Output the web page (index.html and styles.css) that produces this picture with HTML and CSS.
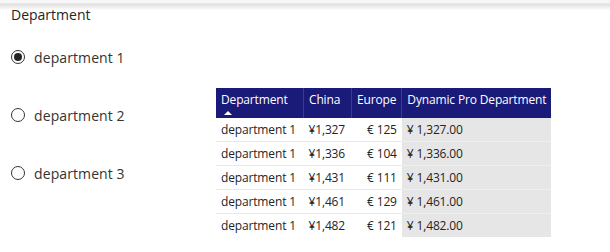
FILE: index.html
```html
<!DOCTYPE html>
<html lang="en">
<head>
    <meta charset="UTF-8">
    <title>Department Slicer</title>
    <link rel="stylesheet" href="styles.css">
</head>
<body>
    <div class="topbar"></div>
    <div class="page">
        <div class="slicer">
            <h1 class="slicer-title">Department</h1>
            <label class="option"><span class="radio checked"></span>department 1</label>
            <label class="option"><span class="radio"></span>department 2</label>
            <label class="option"><span class="radio"></span>department 3</label>
        </div>

        <table class="matrix">
            <thead>
                <tr>
                    <th class="col-dept">Department<span class="sort-arrow"></span></th>
                    <th class="col-china">China</th>
                    <th class="col-europe">Europe</th>
                    <th class="col-dyn">Dynamic Pro Department</th>
                </tr>
            </thead>
            <tbody>
                <tr><td>department 1</td><td>¥1,327</td><td class="num">€ 125</td><td class="dyn">¥ 1,327.00</td></tr>
                <tr><td>department 1</td><td>¥1,336</td><td class="num">€ 104</td><td class="dyn">¥ 1,336.00</td></tr>
                <tr><td>department 1</td><td>¥1,431</td><td class="num">€ 111</td><td class="dyn">¥ 1,431.00</td></tr>
                <tr><td>department 1</td><td>¥1,461</td><td class="num">€ 129</td><td class="dyn">¥ 1,461.00</td></tr>
                <tr><td>department 1</td><td>¥1,482</td><td class="num">€ 121</td><td class="dyn">¥ 1,482.00</td></tr>
            </tbody>
        </table>
    </div>
</body>
</html>
```

FILE: styles.css
```css
body {
    margin: 0;
    font-family: "Open Sans", "Noto Sans", sans-serif;
    color: #252423;
    background: #fff;
}

/* shadow strip along the top */
.topbar {
    height: 10px;
    background: linear-gradient(#f6f6f6 0, #f6f6f6 3px, #dedede 4px, #fff 10px);
}

.page {
    display: flex;
    align-items: flex-start;
}

/* Slicer */
.slicer {
    width: 216px;
    padding-left: 11px;
    box-sizing: border-box;
}

.slicer-title {
    margin: -5px 0 0;
    font-size: 14px;
    font-weight: normal;
    line-height: 20px;
}

.option {
    display: flex;
    align-items: center;
    height: 20px;
    margin-top: 22px;
    font-size: 14px;
    color: #333;
    letter-spacing: 0.1px;
}

.option + .option {
    margin-top: 38px;
}

.radio {
    width: 12px;
    height: 12px;
    border: 1px solid #333;
    border-radius: 50%;
    margin-right: 9px;
    position: relative;
}

.radio.checked::after {
    content: "";
    position: absolute;
    left: 2px;
    top: 2px;
    width: 8px;
    height: 8px;
    border-radius: 50%;
    background: #252423;
}

/* Table */
.matrix {
    margin-top: 78px;
    border-collapse: collapse;
    font-size: 12px;
    letter-spacing: -0.15px;
}

.matrix th {
    background: #1a1a78;
    color: #fff;
    font-weight: normal;
    text-align: left;
    height: 30px;
    padding: 0 5px;
    vertical-align: top;
    line-height: 24px;
    border-left: 1px solid #3c3c8c;
    position: relative;
}

.matrix th:first-child {
    border-left: none;
}

.sort-arrow {
    position: absolute;
    left: 8px;
    bottom: 3px;
    border-left: 4px solid transparent;
    border-right: 4px solid transparent;
    border-bottom: 4px solid #fff;
}

.matrix td {
    height: 23px;
    padding: 0 5px;
    border-bottom: 1px solid #eaeaea;
    color: #252423;
    white-space: nowrap;
}

.matrix tr:last-child td {
    border-bottom: none;
}

.matrix td.num {
    text-align: right;
}

.matrix td.dyn {
    background: #e6e6e6;
    border-bottom-color: #f0f0f0;
}

.col-dept { width: 77px; }
.col-china { width: 37px; }
.col-europe { width: 39px; }
```
